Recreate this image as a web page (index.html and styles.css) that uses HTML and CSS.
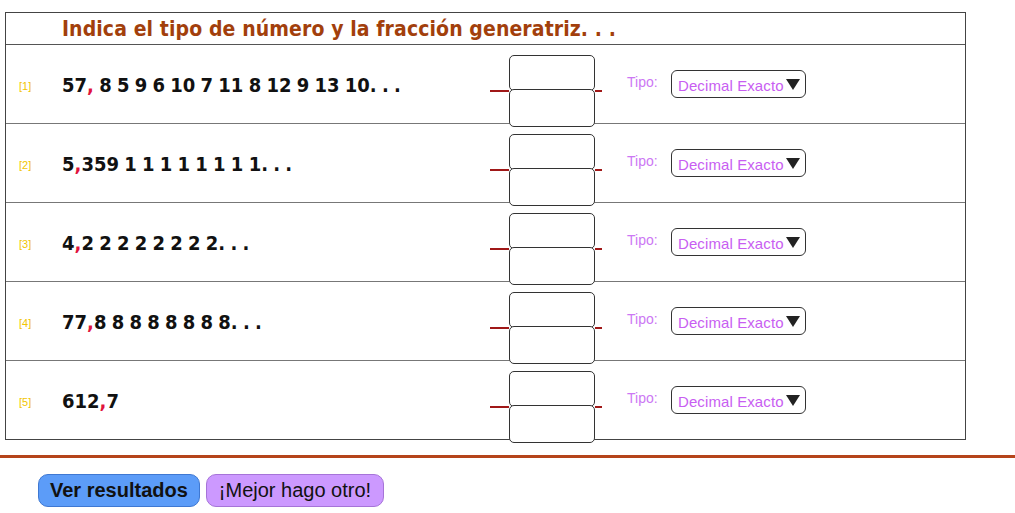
FILE: index.html
```html
<!DOCTYPE html>
<html lang="es">
<head>
    <meta charset="UTF-8">
    <title>Fracción generatriz</title>
    <link rel="stylesheet" href="styles.css">
</head>
<body>
    <div class="exercise">
        <div class="title-row">
            <h1>Indica el tipo de número y la fracción generatriz. . .</h1>
        </div>

        <div class="item">
            <span class="num">[1]</span>
            <span class="value">57<span class="comma">,</span> 8 5 9 6 10 7 11 8 12 9 13 10. . .</span>
            <div class="fraction">
                <span class="dash left"></span>
                <div class="boxes"><input class="box" type="text"><input class="box bottom" type="text"></div>
                <span class="dash right"></span>
            </div>
            <span class="tipo">Tipo:</span>
            <div class="select">Decimal Exacto<span class="arrow"></span></div>
        </div>

        <div class="item">
            <span class="num">[2]</span>
            <span class="value">5<span class="comma">,</span>359 1 1 1 1 1 1 1 1. . .</span>
            <div class="fraction">
                <span class="dash left"></span>
                <div class="boxes"><input class="box" type="text"><input class="box bottom" type="text"></div>
                <span class="dash right"></span>
            </div>
            <span class="tipo">Tipo:</span>
            <div class="select">Decimal Exacto<span class="arrow"></span></div>
        </div>

        <div class="item">
            <span class="num">[3]</span>
            <span class="value">4<span class="comma">,</span>2 2 2 2 2 2 2 2. . .</span>
            <div class="fraction">
                <span class="dash left"></span>
                <div class="boxes"><input class="box" type="text"><input class="box bottom" type="text"></div>
                <span class="dash right"></span>
            </div>
            <span class="tipo">Tipo:</span>
            <div class="select">Decimal Exacto<span class="arrow"></span></div>
        </div>

        <div class="item">
            <span class="num">[4]</span>
            <span class="value">77<span class="comma">,</span>8 8 8 8 8 8 8 8. . .</span>
            <div class="fraction">
                <span class="dash left"></span>
                <div class="boxes"><input class="box" type="text"><input class="box bottom" type="text"></div>
                <span class="dash right"></span>
            </div>
            <span class="tipo">Tipo:</span>
            <div class="select">Decimal Exacto<span class="arrow"></span></div>
        </div>

        <div class="item">
            <span class="num">[5]</span>
            <span class="value">612<span class="comma">,</span>7</span>
            <div class="fraction">
                <span class="dash left"></span>
                <div class="boxes"><input class="box" type="text"><input class="box bottom" type="text"></div>
                <span class="dash right"></span>
            </div>
            <span class="tipo">Tipo:</span>
            <div class="select">Decimal Exacto<span class="arrow"></span></div>
        </div>
    </div>

    <hr class="separator">

    <div class="actions">
        <button class="btn check">Ver resultados</button>
        <button class="btn other">¡Mejor hago otro!</button>
    </div>
</body>
</html>
```

FILE: styles.css
```css
body {
    margin: 0;
    padding: 12px 0 0 5px;
    font-family: "Liberation Sans", Arial, sans-serif;
    background: #fff;
}

.exercise {
    width: 959px;
    border: 1px solid #444;
}

.title-row {
    height: 31px;
    border-bottom: 1px solid #555;
    display: flex;
    align-items: center;
    padding-left: 56px;
}

.title-row h1 {
    margin: 0;
    font-family: "DejaVu Sans", sans-serif;
    font-stretch: condensed;
    font-size: 21px;
    font-weight: bold;
    color: #a23f0c;
    letter-spacing: 0.1px;
}

.item {
    height: 78px;
    display: flex;
    align-items: center;
    border-top: 1px solid #777;
}

.item:nth-child(2) {
    border-top: none;
}

.num {
    width: 56px;
    padding-left: 13px;
    box-sizing: border-box;
    font-size: 11px;
    color: #f2c500;
    margin-top: 4px;
}

.value {
    width: 428px;
    font-family: "DejaVu Sans", sans-serif;
    font-stretch: condensed;
    font-size: 20px;
    font-weight: bold;
    color: #111;
    word-spacing: -1px;
    margin-top: 2px;
}

.comma {
    color: #e0143c;
}

.fraction {
    width: 112px;
    display: flex;
    align-items: center;
    margin-top: 14px;
}

.dash {
    height: 2px;
    background: #a01818;
}

.dash.left {
    width: 19px;
}

.dash.right {
    width: 7px;
}

.boxes {
    display: flex;
    flex-direction: column;
}

.box {
    width: 86px;
    height: 36px;
    box-sizing: border-box;
    border: 1px solid #333;
    border-radius: 5px;
    background: #fff;
    margin: 0;
    padding: 0;
}

.box.bottom {
    height: 38px;
    margin-top: -2px;
}

.tipo {
    margin-left: 25px;
    width: 44px;
    font-size: 14px;
    color: #cc77f4;
    margin-top: -4px;
}

.select {
    width: 135px;
    height: 28px;
    box-sizing: border-box;
    border: 1.5px solid #333;
    border-radius: 6px;
    display: flex;
    align-items: center;
    padding: 2px 0 0 6px;
    font-size: 15px;
    color: #c85ef2;
    letter-spacing: 0.1px;
}

.arrow {
    width: 0;
    height: 0;
    margin: -2px 0 0 2px;
    border-left: 7px solid transparent;
    border-right: 7px solid transparent;
    border-top: 11px solid #222;
}

.separator {
    margin: 15px 0 0 -5px;
    border: none;
    height: 3px;
    background: #b5441a;
}

.actions {
    display: flex;
    gap: 6px;
    padding: 16px 0 0 33px;
}

.btn {
    height: 33px;
    border-radius: 10px;
    font-family: "Liberation Sans", sans-serif;
    font-size: 20px;
    color: #111;
    padding: 0 12px;
    cursor: pointer;
}

.btn.check {
    background: #5c9cf8;
    border: 1px solid #3f78d2;
    font-weight: bold;
    padding: 0 11px;
}

.btn.other {
    background: #cc99ff;
    border: 1px solid #a674d8;
}
```
